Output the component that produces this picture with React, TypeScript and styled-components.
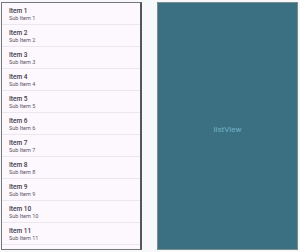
import React from "react";
import styled, { createGlobalStyle } from "styled-components";

const Global = createGlobalStyle`
  html, body { margin: 0; padding: 0; background: #f7f8fa; }
  body { font-family: Roboto, "Noto Sans", sans-serif; }
`;

const Page = styled.div`
  width: 300px;
  height: 252px;
  box-sizing: border-box;
  padding: 2px 2px 2px 1px;
  display: flex;
  gap: 15px;
`;

const ListPanel = styled.div`
  width: 141px;
  height: 248px;
  box-sizing: border-box;
  border: 1px solid #77777a;
  border-right: 2px solid #55555a;
  background: #fdf7fe;
  overflow-y: scroll;
  &::-webkit-scrollbar { width: 3px; }
  &::-webkit-scrollbar-track { background: #fdf7fe; }
  &::-webkit-scrollbar-thumb { background: #b9b7bc; }
`;

const Row = styled.div`
  height: 22px;
  box-sizing: border-box;
  padding: 4px 0 0 7px;
  border-bottom: 1px solid #ece6ee;
  display: flex;
  flex-direction: column;
`;

const Title = styled.div`
  font-size: 6.5px;
  line-height: 8px;
  font-weight: 500;
  color: #3e3c44;
`;

const Sub = styled.div`
  font-size: 5.5px;
  line-height: 7px;
  color: #5a575f;
`;

const ViewPanel = styled.div`
  width: 141px;
  height: 248px;
  box-sizing: border-box;
  border: 1px solid #7d8a8e;
  background: #3a7081;
  display: flex;
  align-items: center;
  justify-content: center;
`;

const ViewLabel = styled.span`
  font-size: 8px;
  color: #72b3c6;
  margin-top: 6px;
`;

const items = Array.from({ length: 12 }, (_, i) => i + 1);

export default function App() {
  return (
    <>
      <Global />
      <Page>
        <ListPanel>
          {items.map((n) => (
            <Row key={n}>
              <Title>Item {n}</Title>
              <Sub>Sub Item {n}</Sub>
            </Row>
          ))}
        </ListPanel>
        <ViewPanel>
          <ViewLabel>listView</ViewLabel>
        </ViewPanel>
      </Page>
    </>
  );
}
